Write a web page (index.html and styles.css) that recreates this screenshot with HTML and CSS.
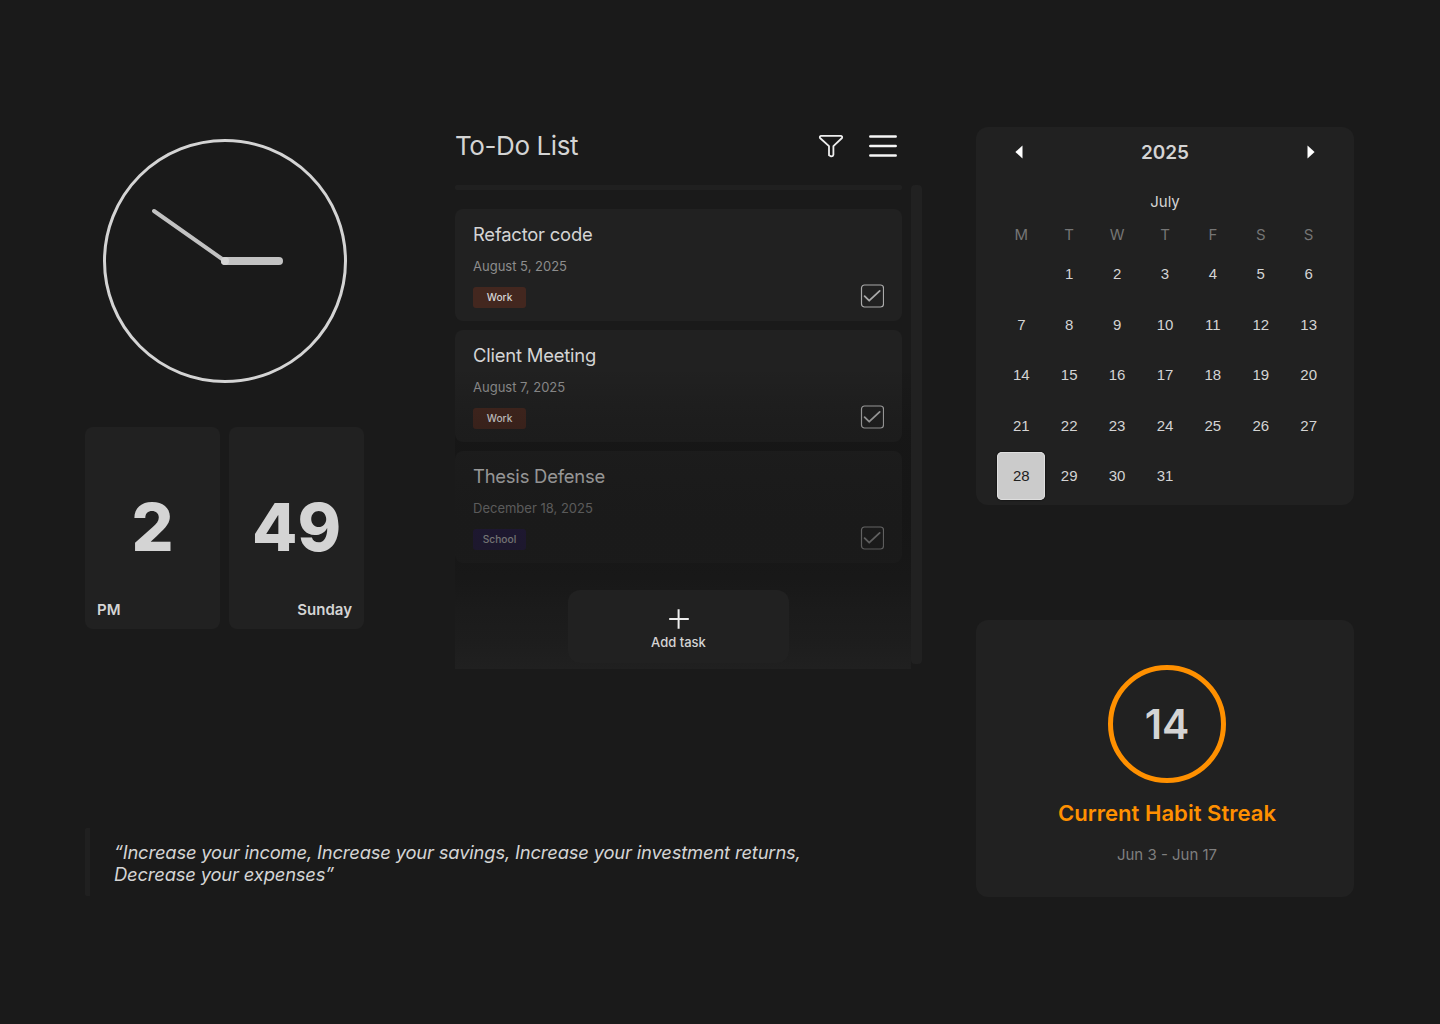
FILE: index.html
```html
<!DOCTYPE html>
<html lang="en">
<head>
<meta charset="utf-8">
<title>Dashboard</title>
<link rel="stylesheet" href="styles.css">
</head>
<body>
<main class="page">
  <div class="primary">
    <div class="widgets">
      <section class="time">
        <svg class="clock" viewBox="0 0 244 244" fill="none" stroke-linecap="round">
          <circle cx="122" cy="122" r="120.5" stroke="#d4d4d4" stroke-width="3"/>
          <path d="M122 122 51 72" stroke="#c2c2c2" stroke-width="4"/>
          <path d="M122 122H176" stroke="#c2c2c2" stroke-width="8"/>
          <circle cx="122" cy="122" r="4" fill="#d4d4d4"/>
        </svg>
        <div class="flip">
          <div class="flip-card"><span class="digits">2</span><span class="caption">PM</span></div>
          <div class="flip-card"><span class="digits">49</span><span class="caption caption-end">Sunday</span></div>
        </div>
      </section>
      <section class="todo">
        <header class="todo-head">
          <h1 class="todo-title">To-Do List</h1>
          <svg class="filter" width="26" height="26" viewBox="0 0 26 26" fill="none" stroke="#eee" stroke-width="1.8" stroke-linejoin="round"><path d="M3 2.9H23Q24.7 3.2 24 5L15.4 13.2V21.8Q15 23.6 12.8 23.3L11 22.2V13.2L2 5Q1.3 3.2 3 2.9Z"/></svg>
          <svg class="menu" width="30" height="26" viewBox="0 0 30 26" stroke="#f5f5f5" stroke-width="2.5" stroke-linecap="round"><path d="M2.3 3.5H27.7M2.3 13H27.7M2.3 22.6H27.7"/></svg>
        </header>
        <div class="todo-body">
          <div class="tasks">
            <div class="sliver"></div>
            <article class="task">
              <h2 class="task-title">Refactor code</h2>
              <p class="task-date">August 5, 2025</p>
              <div class="task-foot"><span class="tag tag-work">Work</span>
                <svg class="check" viewBox="0 0 24 24"><rect x="1.5" y="1" width="22" height="22" rx="3"/><path d="M4.6 12.2 9.2 16.7 19.7 6.9"/></svg></div>
            </article>
            <article class="task">
              <h2 class="task-title">Client Meeting</h2>
              <p class="task-date">August 7, 2025</p>
              <div class="task-foot"><span class="tag tag-work">Work</span>
                <svg class="check" viewBox="0 0 24 24"><rect x="1.5" y="1" width="22" height="22" rx="3"/><path d="M4.6 12.2 9.2 16.7 19.7 6.9"/></svg></div>
            </article>
            <article class="task">
              <h2 class="task-title">Thesis Defense</h2>
              <p class="task-date">December 18, 2025</p>
              <div class="task-foot"><span class="tag tag-school">School</span>
                <svg class="check" viewBox="0 0 24 24"><rect x="1.5" y="1" width="22" height="22" rx="3"/><path d="M4.6 12.2 9.2 16.7 19.7 6.9"/></svg></div>
            </article>
            <div class="fade"></div>
            <button class="add">
              <svg width="22" height="22" viewBox="0 0 22 22" stroke="#eee" stroke-width="2"><path d="M1.2 11H20.8M10.6 1.2V20.8"/></svg>
              <span>Add task</span>
            </button>
          </div>
          <div class="scrollbar"></div>
        </div>
      </section>
    </div>
    <blockquote class="quote">“Increase your income, Increase your savings, Increase your investment returns,<br>Decrease your expenses”</blockquote>
  </div>
  <aside class="side">
    <section class="calendar">
      <header class="cal-head">
        <svg width="8" height="14" viewBox="0 0 8 14" fill="#fff"><path d="M7.5 .5V13.5L.4 7Z"/></svg>
        <span class="year">2025</span>
        <svg width="8" height="14" viewBox="0 0 8 14" fill="#fff"><path d="M.5 .5V13.5L7.6 7Z"/></svg>
      </header>
      <div class="month">July</div>
      <div class="weekdays"><span>M</span><span>T</span><span>W</span><span>T</span><span>F</span><span>S</span><span>S</span></div>
      <div class="days">
        <span></span><span>1</span><span>2</span><span>3</span><span>4</span><span>5</span><span>6</span>
        <span>7</span><span>8</span><span>9</span><span>10</span><span>11</span><span>12</span><span>13</span>
        <span>14</span><span>15</span><span>16</span><span>17</span><span>18</span><span>19</span><span>20</span>
        <span>21</span><span>22</span><span>23</span><span>24</span><span>25</span><span>26</span><span>27</span>
        <span class="selected">28</span><span>29</span><span>30</span><span>31</span>
      </div>
    </section>
    <section class="streak">
      <div class="ring">14</div>
      <div class="streak-title">Current Habit Streak</div>
      <div class="streak-dates">Jun 3 - Jun 17</div>
    </section>
  </aside>
</main>
</body>
</html>
```
FILE: styles.css
```css
* { box-sizing: border-box; }
body { margin: 0; background: #1a1a1a; color: #d4d4d4; font-family: Inter, "Liberation Sans", sans-serif; }
h1, h2, p, blockquote { margin: 0; font-weight: 400; }
svg { display: block; flex: none; }

.page { display: flex; gap: 54px; height: 1024px; padding: 127px 86px 127px 85px; }
.primary { width: 837px; display: flex; flex-direction: column; justify-content: space-between; padding-bottom: 1px; }
.widgets { display: flex; gap: 91px; }

.time { width: 279px; padding-top: 12px; display: flex; flex-direction: column; gap: 44px; }
.clock { width: 244px; height: 244px; margin-left: 18px; }
.flip { display: flex; gap: 9px; }
.flip-card { width: 135px; height: 202px; border-radius: 8px; background: #212121; display: flex; flex-direction: column; justify-content: flex-end; padding: 0 12px 8px; }
.digits { font-size: 66px; font-weight: 800; line-height: 80px; text-align: center; margin: 0 -12px 32px; }
.caption { font-size: 15px; font-weight: 600; line-height: 22px; }
.caption-end { text-align: right; }

.todo { width: 467px; }
.todo-head { display: flex; align-items: center; height: 38px; padding-right: 24px; }
.todo-title { flex: 1; font-size: 26px; line-height: 38px; letter-spacing: -.4px; }
.filter { margin-right: 24px; }
.todo-body { display: flex; margin-top: 20px; }
.tasks { position: relative; width: 456px; height: 484px; display: flex; flex-direction: column; gap: 9px; }
.sliver { width: 447px; height: 5px; margin-bottom: 10px; border-radius: 2px; background: #202020; }
.task { width: 447px; height: 112px; padding: 12px 18px 0; border-radius: 8px; background: #212121; }
.task-title { font-size: 18.4px; line-height: 26px; letter-spacing: -.2px; }
.task-date { margin-top: 10px; font-size: 13px; line-height: 18px; color: #8d8d8d; }
.task-foot { display: flex; justify-content: space-between; align-items: center; margin-top: 9px; height: 24px; }
.tag { width: 53px; height: 21px; margin-top: 2px; border-radius: 3px; font-size: 10.2px; font-weight: 500; line-height: 21px; text-align: center; }
.tag-work { background: #43271f; }
.tag-school { background: #271c4a; }
.check { width: 24px; height: 24px; fill: none; stroke: #aaa; stroke-width: 1.2; stroke-linecap: round; stroke-linejoin: round; }
.check path { stroke-width: 1.8; }
.fade {
  position: absolute; left: 0; right: 0; bottom: 0; height: 303px;
  background: linear-gradient(rgba(0,0,0,0), rgba(3,3,3,.08) 10%, rgba(7,7,7,.17) 20%, rgba(12,12,12,.26) 30%, rgba(15,15,15,.35) 40%, rgba(17,17,17,.43) 50%, rgba(20,20,20,.53) 60%, rgba(23,23,23,.65) 70%, rgba(27,27,27,.8) 80%, rgba(29,29,29,.9) 90%, #202020);
}
.add {
  position: relative; align-self: flex-start; width: 221px; height: 73px; margin: 18px 0 0 113px; padding: 18px 0 0;
  border: 0; border-radius: 12px; background: #212121; color: #d4d4d4;
  display: flex; flex-direction: column; align-items: center; gap: 3px; font: 500 13px/18px Inter, sans-serif;
}
.scrollbar { width: 11px; height: 479px; border-radius: 4px; background: #212121; }

.quote { height: 68px; padding: 13px 0 0 24px; border-left: 5px solid #202020; border-radius: 2px; font-size: 18.4px; line-height: 22px; letter-spacing: -.18px; font-style: italic; }

.side { width: 378px; display: flex; flex-direction: column; justify-content: space-between; }
.calendar { height: 378px; border-radius: 12px; background: #212121; }
.cal-head { display: flex; justify-content: space-between; align-items: center; height: 50px; padding: 0 39px; }
.year { font-size: 19px; font-weight: 600; }
.month { margin-top: 14px; font-size: 15px; line-height: 22px; text-align: center; }
.weekdays, .days { display: grid; grid-template-columns: repeat(7, 47.9px); justify-content: center; text-align: center; }
.weekdays { margin-top: 11px; font-size: 15px; line-height: 22px; color: #757575; }
.days { margin-top: 4px; row-gap: 2.6px; font: 15px/48px "Liberation Sans", sans-serif; }
.days span { height: 48px; }
.days .selected { border-radius: 5px; background: #cbcbcb; color: #212121; box-shadow: inset 0 0 0 1px #dedede, 0 0 2px #000; }

.streak { height: 277px; padding: 45px 0 0 4px; border-radius: 12px; background: #212121; display: flex; flex-direction: column; align-items: center; }
.ring { width: 118px; height: 118px; border: 5px solid #ff9000; border-radius: 50%; font-size: 41px; font-weight: 600; line-height: 109px; text-align: center; }
.streak-title { margin-top: 16px; font-size: 22.1px; line-height: 28px; font-weight: 600; color: #ff9000; }
.streak-dates { margin-top: 17px; font-size: 15px; line-height: 22px; color: #7f7f7f; }
```
